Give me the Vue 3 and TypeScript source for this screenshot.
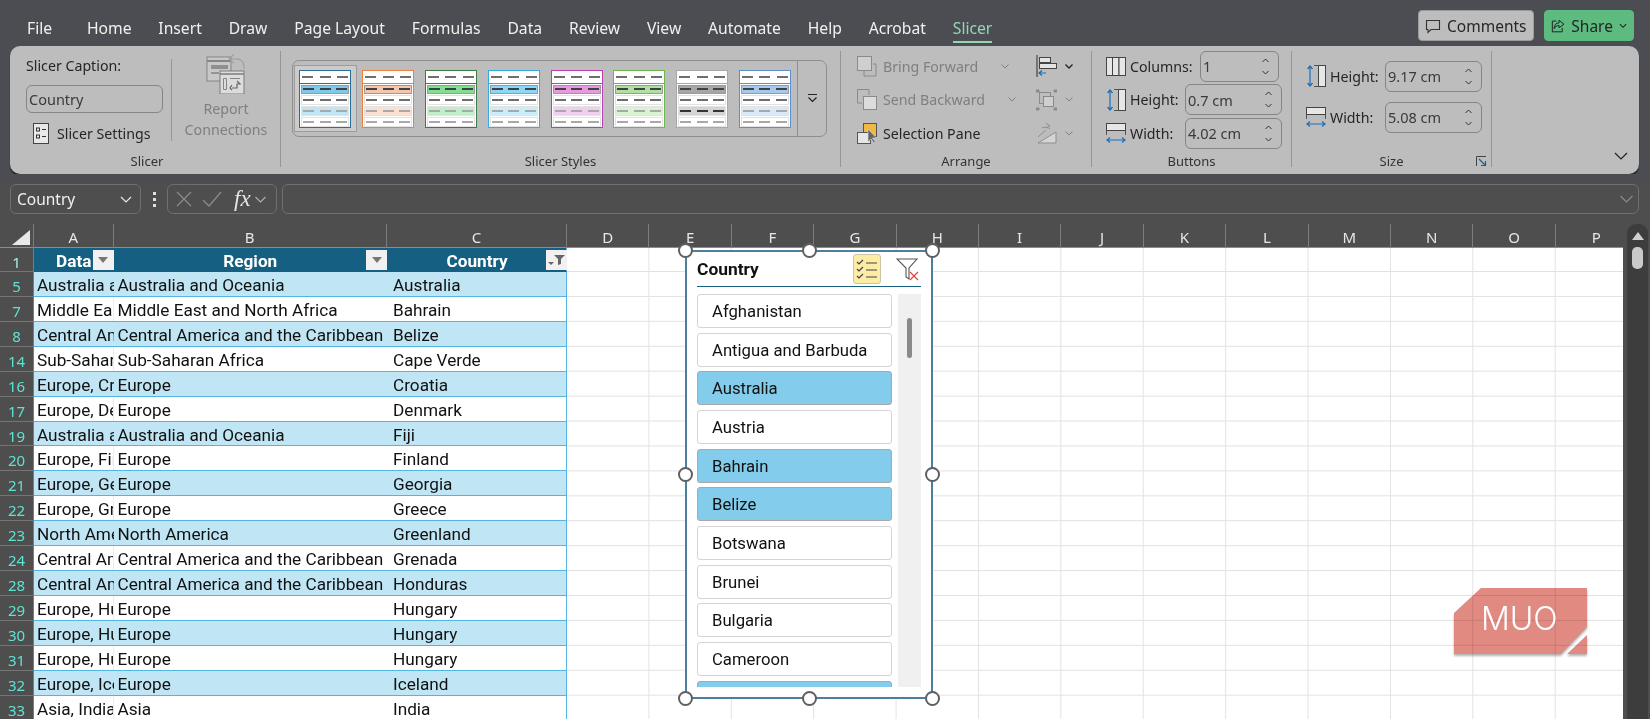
<script setup lang="ts">
const tabs = ['File', 'Home', 'Insert', 'Draw', 'Page Layout', 'Formulas', 'Data', 'Review', 'View', 'Automate', 'Help', 'Acrobat']

const swatches = [
  { line: '#2a6f97', band: '#7fcaec', light: '#c0e6f5', selected: true },
  { line: '#f08040', band: '#f6c5ab', light: '#fbe0d2' },
  { line: '#3a7d44', band: '#80e090', light: '#c0eec8' },
  { line: '#35ace0', band: '#8ad7f7', light: '#caedfb' },
  { line: '#b840b0', band: '#e89ae0', light: '#f2ceee' },
  { line: '#6cb84c', band: '#b2e0a0', light: '#d9f2d0' },
  { line: '#a8a8a8', band: '#a6a6a6', light: '#d4d4d4', dark: true },
  { line: '#5b8fd0', band: '#a6c9ec', light: '#dae9f8' },
]

const columns = ['D', 'E', 'F', 'G', 'H', 'I', 'J', 'K', 'L', 'M', 'N', 'O', 'P']

const rows = [
  { n: 5, a: 'Australia and Oceania', b: 'Australia and Oceania', c: 'Australia' },
  { n: 7, a: 'Middle East', b: 'Middle East and North Africa', c: 'Bahrain' },
  { n: 8, a: 'Central America', b: 'Central America and the Caribbean', c: 'Belize' },
  { n: 14, a: 'Sub-Saharan', b: 'Sub-Saharan Africa', c: 'Cape Verde' },
  { n: 16, a: 'Europe, Croatia', b: 'Europe', c: 'Croatia' },
  { n: 17, a: 'Europe, Denmark', b: 'Europe', c: 'Denmark' },
  { n: 19, a: 'Australia and Oceania', b: 'Australia and Oceania', c: 'Fiji' },
  { n: 20, a: 'Europe, Finland', b: 'Europe', c: 'Finland' },
  { n: 21, a: 'Europe, Georgia', b: 'Europe', c: 'Georgia' },
  { n: 22, a: 'Europe, Greece', b: 'Europe', c: 'Greece' },
  { n: 23, a: 'North America', b: 'North America', c: 'Greenland' },
  { n: 24, a: 'Central America', b: 'Central America and the Caribbean', c: 'Grenada' },
  { n: 28, a: 'Central America', b: 'Central America and the Caribbean', c: 'Honduras' },
  { n: 29, a: 'Europe, Hungary', b: 'Europe', c: 'Hungary' },
  { n: 30, a: 'Europe, Hungary', b: 'Europe', c: 'Hungary' },
  { n: 31, a: 'Europe, Hungary', b: 'Europe', c: 'Hungary' },
  { n: 32, a: 'Europe, Iceland', b: 'Europe', c: 'Iceland' },
  { n: 33, a: 'Asia, India', b: 'Asia', c: 'India' },
]

const slicerItems = [
  { name: 'Afghanistan', on: false },
  { name: 'Antigua and Barbuda', on: false },
  { name: 'Australia', on: true },
  { name: 'Austria', on: false },
  { name: 'Bahrain', on: true },
  { name: 'Belize', on: true },
  { name: 'Botswana', on: false },
  { name: 'Brunei', on: false },
  { name: 'Bulgaria', on: false },
  { name: 'Cameroon', on: false },
  { name: '', on: true },
]
</script>

<template>
  <div class="app">
    <header class="tabbar">
      <nav class="tabs">
        <span v-for="t in tabs" :key="t" class="tab">{{ t }}</span>
        <span class="tab tab-active">Slicer</span>
      </nav>
      <div class="top-actions">
        <button class="btn-comments">
          <svg width="16" height="16" viewBox="0 0 16 16" fill="none" stroke="#333" stroke-width="1.1"><path d="M1.5 2.5h13v9H6l-3 3v-3H1.500z" /></svg>
          Comments
        </button>
        <button class="btn-share">
          <svg width="16" height="16" viewBox="0 0 16 16" fill="none" stroke="#222" stroke-width="1.1"><path d="M9 1.500l5.500 4.500L9 10V7.500C6 7.500 4.500 9 3.500 11 3.500 7 5.500 4.500 9 4.500zM6 2.500H1.500v12h11V10" /></svg>
          Share
          <svg width="9" height="6" viewBox="0 0 9 6" fill="none" stroke="#222" stroke-width="1.2"><path d="M1 1l3.500 3.500L8 1" /></svg>
        </button>
      </div>
    </header>

    <section class="ribbon">
      <div class="group group-slicer">
        <div class="group-body">
          <div class="caption-col">
            <div class="caption-label">Slicer Caption:</div>
            <div class="caption-input">Country</div>
            <div class="settings">
              <svg width="16" height="21" viewBox="0 0 16 21">
                <rect x="0.5" y="0.5" width="15" height="20" fill="#e8e8e8" stroke="#444" />
                <rect x="3.5" y="5" width="3" height="3" fill="none" stroke="#333" />
                <rect x="3.5" y="12" width="3" height="3" fill="none" stroke="#333" />
                <path d="M9 6.500h4M9 13.500h4" stroke="#333" />
              </svg>
              <span>Slicer Settings</span>
            </div>
          </div>
          <div class="inner-sep"></div>
          <div class="report">
            <svg width="40" height="40" viewBox="0 0 40 40" fill="none">
              <rect x="1" y="3" width="24" height="24" fill="#c8c8c8" stroke="#858585" />
              <path d="M1 7h24" stroke="#858585" stroke-width="2" />
              <path d="M5 11h17v4H5z" fill="#8f8f8f" />
              <path d="M5 19h8" stroke="#858585" stroke-width="1.500" />
              <rect x="14" y="17" width="24" height="23" fill="#dcdcdc" stroke="#7d7d7d" />
              <path d="M14 20h24" stroke="#7d7d7d" stroke-width="1.500" />
              <path d="M17.500 24.500h3v11h-3zM24 24.500h10" stroke="#858585" />
              <path d="M31 27l3 3h-3v4h-5M26 31l-2 3 2 2" stroke="#666" stroke-width="1.200" />
              <path d="M28 0l-5 5 5 4M24 5h6a7 7 0 0 1 8 7v3" stroke="#a0a0a0" stroke-width="1.200" />
            </svg>
            <span>Report</span>
            <span>Connections</span>
          </div>
        </div>
        <div class="group-label">Slicer</div>
      </div>

      <div class="group group-styles">
        <div class="group-body">
          <div class="gallery">
            <div class="gallery-cells">
              <div v-for="(s, i) in swatches" :key="i" class="cell" :class="{ selected: s.selected }">
                <div class="swatch" :style="{ borderColor: s.line }">
                  <div class="sw-head" :style="{ borderColor: s.line }"><i></i><i></i><i></i></div>
                  <div class="sw-row sw-strong" :style="{ background: s.band }"><i></i><i></i><i></i></div>
                  <div class="sw-row"><i></i><i></i><i></i></div>
                  <div class="sw-row" :class="s.dark ? 'sw-dark' : 'sw-soft'" :style="{ background: s.light }"><i></i><i></i><i></i></div>
                  <div class="sw-row sw-soft"><i></i><i></i><i></i></div>
                </div>
              </div>
            </div>
            <div class="gallery-more">
              <svg width="11" height="11" viewBox="0 0 11 11" fill="none" stroke="#222" stroke-width="1.2"><path d="M1 1.500h9M1.500 4.500l4 4 4-4" /></svg>
            </div>
          </div>
        </div>
        <div class="group-label">Slicer Styles</div>
      </div>

      <div class="group group-arrange">
        <div class="group-body">
          <div class="arrange-col">
            <div class="arr-row muted">
              <svg width="20" height="21" viewBox="0 0 20 21" fill="none" stroke="#8a8a8a"><path d="M7 8v12h12V8h-3" /><rect x="0.5" y="0.5" width="14" height="14" fill="#cfcfcf" /></svg>
              <span>Bring Forward</span>
              <svg class="chev" width="8" height="5" viewBox="0 0 8 5" fill="none" stroke="#808080"><path d="M.5.5L4 4 7.500.5" /></svg>
            </div>
            <div class="arr-row muted">
              <svg width="20" height="21" viewBox="0 0 20 21" fill="none" stroke="#8a8a8a"><path d="M12 6V.5H.5V14H5" /><rect x="6.5" y="7.5" width="13" height="13" fill="#dcdcdc" /></svg>
              <span>Send Backward</span>
              <svg class="chev" width="8" height="5" viewBox="0 0 8 5" fill="none" stroke="#808080"><path d="M.5.5L4 4 7.500.5" /></svg>
            </div>
            <div class="arr-row">
              <svg width="20" height="21" viewBox="0 0 20 21" fill="none">
                <rect x="6.5" y="0.5" width="13" height="13" fill="#efb847" stroke="#555" />
                <rect x="0.5" y="9.5" width="13" height="11" fill="#e6e6e6" stroke="#555" />
                <path d="M11 6v13l3-3 3 4 1.500-1-3-4h4z" fill="#666" stroke="#ddd" stroke-width="0.6" />
              </svg>
              <span>Selection Pane</span>
            </div>
          </div>
          <div class="arrange-col arrange-tools">
            <div class="tool-row">
              <svg width="21" height="22" viewBox="0 0 21 22" fill="none">
                <path d="M1 0v22" stroke="#444" stroke-width="1.2" />
                <rect x="3.5" y="2.5" width="11" height="5" fill="#e4e4e4" stroke="#444" />
                <rect x="3.5" y="8.5" width="17" height="5" fill="#e4e4e4" stroke="#444" />
                <path d="M10 18H3M6 15.500L3 18l3 2.500" stroke="#1a6fb8" stroke-width="1.2" />
              </svg>
              <svg width="8" height="5" viewBox="0 0 8 5" fill="none" stroke="#222" stroke-width="1.3"><path d="M.5.5L4 4 7.500.5" /></svg>
            </div>
            <div class="tool-row">
              <svg width="21" height="22" viewBox="0 0 21 22" fill="none" stroke="#8a8a8a">
                <rect x="3.5" y="3.5" width="11" height="11" />
                <rect x="7.5" y="7.5" width="10" height="10" fill="#cfcfcf" />
                <path d="M0 1h3v2H0zM18 1h3v2h-3zM0 19h3v2H0zM18 19h3v2h-3z" fill="#8a8a8a" />
              </svg>
              <svg width="8" height="5" viewBox="0 0 8 5" fill="none" stroke="#808080"><path d="M.5.5L4 4 7.500.5" /></svg>
            </div>
            <div class="tool-row">
              <svg width="21" height="22" viewBox="0 0 21 22" fill="none" stroke="#8f8f8f">
                <path d="M20 10v11H2z" fill="#d4d4d4" />
                <path d="M2 15l8-7M6 6c3-1.500 6-1 8 1M10 1l4 3-4 2" />
              </svg>
              <svg width="8" height="5" viewBox="0 0 8 5" fill="none" stroke="#808080"><path d="M.5.5L4 4 7.500.5" /></svg>
            </div>
          </div>
        </div>
        <div class="group-label">Arrange</div>
      </div>

      <div class="group group-buttons">
        <div class="group-body stack">
          <div class="field">
            <svg width="20" height="19" viewBox="0 0 20 19" fill="#e6e6e6" stroke="#444"><rect x="0.500" y="0.500" width="6" height="18" /><rect x="6.500" y="0.500" width="6.500" height="18" /><rect x="13" y="0.500" width="6.500" height="18" /></svg>
            <span class="field-label wide">Columns:</span>
            <div class="spin narrow">
              <span>1</span>
              <span class="arrows"><svg width="7" height="5" viewBox="0 0 7 5" fill="none" stroke="#333"><path d="M.5 4L3.500 1l3 3" /></svg><svg width="7" height="5" viewBox="0 0 7 5" fill="none" stroke="#333"><path d="M.5 1l3 3 3-3" /></svg></span>
            </div>
          </div>
          <div class="field">
            <svg width="20" height="22" viewBox="0 0 20 22" fill="none"><path d="M4 1v20M1.500 4L4 1l2.500 3M1.500 18L4 21l2.500-3" stroke="#1a6fb8" stroke-width="1.200" /><path d="M8 .5h4M8 21.500h4" stroke="#555" /><rect x="12.500" y="0.500" width="7" height="21" fill="#e6e6e6" stroke="#444" /></svg>
            <span class="field-label">Height:</span>
            <div class="spin">
              <span>0.7 cm</span>
              <span class="arrows"><svg width="7" height="5" viewBox="0 0 7 5" fill="none" stroke="#333"><path d="M.5 4L3.500 1l3 3" /></svg><svg width="7" height="5" viewBox="0 0 7 5" fill="none" stroke="#333"><path d="M.5 1l3 3 3-3" /></svg></span>
            </div>
          </div>
          <div class="field">
            <svg width="20" height="21" viewBox="0 0 20 21" fill="none"><rect x="0.500" y="0.500" width="19" height="7" fill="#e6e6e6" stroke="#444" /><path d="M.5 8v4M19.500 8v4" stroke="#555" /><path d="M1 17h18M4 14.500L1 17l3 2.500M16 14.500l3 2.500-3 2.500" stroke="#1a6fb8" stroke-width="1.200" /></svg>
            <span class="field-label">Width:</span>
            <div class="spin">
              <span>4.02 cm</span>
              <span class="arrows"><svg width="7" height="5" viewBox="0 0 7 5" fill="none" stroke="#333"><path d="M.5 4L3.500 1l3 3" /></svg><svg width="7" height="5" viewBox="0 0 7 5" fill="none" stroke="#333"><path d="M.5 1l3 3 3-3" /></svg></span>
            </div>
          </div>
        </div>
        <div class="group-label">Buttons</div>
      </div>

      <div class="group group-size">
        <div class="group-body stack size-stack">
          <div class="field">
            <svg width="20" height="22" viewBox="0 0 20 22" fill="none"><path d="M4 1v20M1.500 4L4 1l2.500 3M1.500 18L4 21l2.500-3" stroke="#1a6fb8" stroke-width="1.200" /><path d="M8 .5h4M8 21.500h4" stroke="#555" /><rect x="12.500" y="0.500" width="7" height="21" fill="#e6e6e6" stroke="#444" /></svg>
            <span class="field-label">Height:</span>
            <div class="spin">
              <span>9.17 cm</span>
              <span class="arrows"><svg width="7" height="5" viewBox="0 0 7 5" fill="none" stroke="#333"><path d="M.5 4L3.500 1l3 3" /></svg><svg width="7" height="5" viewBox="0 0 7 5" fill="none" stroke="#333"><path d="M.5 1l3 3 3-3" /></svg></span>
            </div>
          </div>
          <div class="field">
            <svg width="20" height="21" viewBox="0 0 20 21" fill="none"><rect x="0.500" y="0.500" width="19" height="7" fill="#e6e6e6" stroke="#444" /><path d="M.5 8v4M19.500 8v4" stroke="#555" /><path d="M1 17h18M4 14.500L1 17l3 2.500M16 14.500l3 2.500-3 2.500" stroke="#1a6fb8" stroke-width="1.200" /></svg>
            <span class="field-label">Width:</span>
            <div class="spin">
              <span>5.08 cm</span>
              <span class="arrows"><svg width="7" height="5" viewBox="0 0 7 5" fill="none" stroke="#333"><path d="M.5 4L3.500 1l3 3" /></svg><svg width="7" height="5" viewBox="0 0 7 5" fill="none" stroke="#333"><path d="M.5 1l3 3 3-3" /></svg></span>
            </div>
          </div>
        </div>
        <div class="group-label">Size</div>
        <svg class="launcher" width="11" height="11" viewBox="0 0 11 11" fill="none"><path d="M.5 10V.5H10" stroke="#444" /><path d="M3 3l6.500 6.500M9.500 5v4.500H5" stroke="#1a5f90" stroke-width="1.200" /></svg>
      </div>

      <div class="ribbon-end">
        <svg width="14" height="8" viewBox="0 0 14 8" fill="none" stroke="#222" stroke-width="1.200"><path d="M1 1l6 6 6-6" /></svg>
      </div>
    </section>

    <section class="formula-bar">
      <div class="name-box">
        <span>Country</span>
        <svg width="12" height="7" viewBox="0 0 12 7" fill="none" stroke="#e8e8e8" stroke-width="1.200"><path d="M1 1l5 5 5-5" /></svg>
      </div>
      <div class="dots"><i></i><i></i><i></i></div>
      <div class="fx-box">
        <svg width="16" height="16" viewBox="0 0 16 16" fill="none" stroke="#8c8c8c" stroke-width="1.200"><path d="M1 1l14 14M15 1L1 15" /></svg>
        <svg width="20" height="16" viewBox="0 0 20 16" fill="none" stroke="#8c8c8c" stroke-width="1.200"><path d="M1 9l6 6L19 1" /></svg>
        <span class="fx">fx</span>
        <svg width="11" height="7" viewBox="0 0 11 7" fill="none" stroke="#b0b0b0" stroke-width="1.100"><path d="M.5 1l5 5 5-5" /></svg>
      </div>
      <div class="formula-input">
        <svg width="13" height="8" viewBox="0 0 13 8" fill="none" stroke="#8c8c8c" stroke-width="1.100"><path d="M.5 1l6 6 6-6" /></svg>
      </div>
    </section>

    <section class="sheet">
      <div class="sheet-main">
        <div class="col-heads">
          <div class="corner"><span class="corner-tri"></span></div>
          <div class="col-head col-a">A</div>
          <div class="col-head col-b">B</div>
          <div class="col-head col-c">C</div>
          <div v-for="c in columns" :key="c" class="col-head col-n">{{ c }}</div>
        </div>

        <div class="grid">
          <div class="row-heads">
            <div class="row-head row-head-first">1</div>
            <div v-for="r in rows" :key="r.n" class="row-head">{{ r.n }}</div>
          </div>
          <div class="table">
            <div class="tr thead">
              <div class="td col-a">Data<span class="filter-btn"><i class="tri"></i></span></div>
              <div class="td col-b">Region<span class="filter-btn"><i class="tri"></i></span></div>
              <div class="td col-c">Country
                <span class="filter-btn">
                  <svg width="17" height="12" viewBox="0 0 17 12"><path d="M0 8h6L3 11z" fill="#666" /><path d="M6 1h11l-4 4v5l-3 1V5z" fill="#666" /></svg>
                </span>
              </div>
            </div>
            <div v-for="(r, i) in rows" :key="r.n" class="tr" :class="{ band: i % 2 === 0 }">
              <div class="td col-a">{{ r.a }}</div>
              <div class="td col-b">{{ r.b }}</div>
              <div class="td col-c">{{ r.c }}</div>
            </div>
          </div>
        </div>
      </div>

      <aside class="vscroll">
        <div class="vscroll-inner">
          <span class="up-arrow"></span>
          <span class="vthumb"></span>
        </div>
      </aside>

      <div class="slicer">
        <div class="slicer-head">
          <span class="slicer-title">Country</span>
          <span class="multi-btn">
            <svg width="22" height="20" viewBox="0 0 22 20" fill="none" stroke="#444" stroke-width="1.200">
              <path d="M1 3l2 2 4-4M1 10l2 2 4-4M1 17l2 2 4-4" />
              <path d="M10 4h11M10 11h11M10 18h11" />
            </svg>
          </span>
          <svg class="clear-btn" width="23" height="23" viewBox="0 0 23 23" fill="none">
            <path d="M1 1h20l-8 9v11l-3-2v-9z" stroke="#555" stroke-width="1.100" />
            <path d="M14 14l8 8M22 14l-8 8" stroke="#e2483f" stroke-width="1.300" />
          </svg>
        </div>
        <div class="slicer-body">
          <div class="slicer-list">
            <div v-for="(it, i) in slicerItems" :key="i" class="slicer-item" :class="{ on: it.on }">{{ it.name }}</div>
          </div>
          <div class="slicer-scroll"><span class="slicer-thumb"></span></div>
        </div>
        <span class="handle h-tl"></span>
        <span class="handle h-tm"></span>
        <span class="handle h-tr"></span>
        <span class="handle h-ml"></span>
        <span class="handle h-mr"></span>
        <span class="handle h-bl"></span>
        <span class="handle h-bm"></span>
        <span class="handle h-br"></span>
      </div>

      <div class="muo">
        <svg width="134" height="67" viewBox="0 0 134 67">
          <path d="M0 25L27 0h106v39l-26 27H0zM113 66l20-19v19z" fill="#e18a82" />
        </svg>
        <span class="muo-text">MUO</span>
      </div>
    </section>
  </div>
</template>

<style scoped>
.app {
  width: 1650px;
  height: 719px;
  overflow: hidden;
  background: #4b4d52;
  font-family: "Noto Sans", "Open Sans", sans-serif;
  color: #262626;
  display: flex;
  flex-direction: column;
}

/* top tabs */
.tabbar {
  height: 46px;
  flex: none;
  display: flex;
  justify-content: space-between;
}
.tabs {
  display: flex;
  gap: 26.8px;
  padding-left: 27px;
}
.tab {
  font-size: 15.7px;
  line-height: 20px;
  margin-top: 18px;
  height: 23px;
  color: #f0f0f0;
}
.tab:first-child {
  margin-right: 8px;
}
.tab-active {
  color: #93d7b1;
  border-bottom: 2px solid #93d7b1;
}
.top-actions {
  display: flex;
  gap: 10px;
  padding: 10px 16px 0 0;
}
.top-actions button {
  height: 31px;
  border: 1px solid #9a9a9a;
  border-radius: 4px;
  font: inherit;
  font-size: 15.5px;
  color: #262626;
  display: flex;
  align-items: center;
  gap: 6px;
  padding: 0 6px;
}
.btn-comments {
  width: 116px;
  background: #bdbdbd;
}
.btn-share {
  width: 90px;
  background: #5dbb80;
  border-color: #5dbb80 !important;
}

/* ribbon */
.ribbon {
  margin-left: 10px;
  width: 1629px;
  height: 128px;
  flex: none;
  box-sizing: border-box;
  padding: 5px 0 7px;
  background: #bdbdbd;
  border-radius: 10px;
  box-shadow: 0 2px 1px rgba(0, 0, 0, 0.55);
  display: flex;
  font-size: 14.2px;
}
.group {
  position: relative;
  flex: none;
  box-sizing: border-box;
  border-right: 1px solid #969696;
  display: flex;
  flex-direction: column;
}
.group-body {
  flex: 1;
  display: flex;
  min-height: 0;
}
.group-label {
  height: 18px;
  line-height: 18px;
  font-size: 13px;
  text-align: center;
  color: #333;
  margin: 3px 0 -3px;
}
.group-slicer { width: 271px; }
.group-styles { width: 560px; }
.group-arrange { width: 251px; }
.group-buttons { width: 200px; }
.group-size { width: 200px; }
.group-slicer .group-label { padding-left: 4px; }

.caption-col {
  width: 161px;
  box-sizing: border-box;
  padding: 5px 0 0 16px;
  flex: none;
}
.caption-label {
  line-height: 20px;
}
.caption-input {
  width: 137px;
  height: 28px;
  box-sizing: border-box;
  margin-top: 9px;
  padding-left: 2px;
  line-height: 26px;
  border: 1px solid #858585;
  border-radius: 6px;
  font-size: 14.5px;
  color: #3a3a3a;
}
.settings {
  display: flex;
  align-items: center;
  gap: 8px;
  margin: 10px 0 0 7px;
  height: 21px;
}
.inner-sep {
  width: 1px;
  height: 82px;
  margin-top: 8px;
  background: #969696;
}
.report {
  flex: 1;
  display: flex;
  flex-direction: column;
  align-items: center;
  color: #7f7f7f;
  line-height: 20.5px;
  padding-top: 3px;
}
.report svg {
  margin-bottom: 5px;
}

.gallery {
  margin: 9px 0 0 11px;
  width: 535px;
  height: 77px;
  box-sizing: border-box;
  border: 1px solid #8f8f8f;
  border-radius: 7px;
  display: flex;
}
.gallery-cells {
  display: flex;
  padding: 4px 0 0 1px;
  width: 504px;
  box-sizing: border-box;
}
.cell {
  width: 62.8px;
  height: 67px;
  flex: none;
  box-sizing: border-box;
  display: flex;
  align-items: center;
  justify-content: center;
  border: 1px solid transparent;
}
.cell.selected {
  background: #cbcbcb;
  border-color: #9c9c9c;
}
.swatch {
  width: 52px;
  height: 58px;
  box-sizing: border-box;
  border: 1px solid;
  background: #fff;
  display: flex;
  flex-direction: column;
}
.sw-head {
  height: 12px;
  flex: none;
  border-bottom: 1px solid;
  display: flex;
  align-items: center;
  justify-content: space-between;
  padding: 0 2px;
}
.sw-row {
  flex: 1;
  margin: 1px 1px 0;
  border: 1px solid #e2e2e2;
  display: flex;
  align-items: center;
  justify-content: space-between;
  padding: 0 1px;
}
.sw-head i,
.sw-row i {
  width: 11px;
  height: 2px;
  background: #6e6e6e;
}
.sw-strong {
  border-color: #9a9a9a;
}
.sw-strong i {
  background: #3c4246;
}
.sw-soft i {
  background: #a8a8a8;
}
.sw-dark i {
  background: #333;
}
.gallery-more {
  flex: 1;
  border-left: 1px solid #8f8f8f;
  display: flex;
  align-items: center;
  justify-content: center;
}

.arrange-col {
  display: flex;
  flex-direction: column;
  gap: 3.5px;
  padding-left: 16px;
  width: 195px;
  box-sizing: border-box;
}
.arr-row {
  height: 30px;
  display: flex;
  align-items: center;
  gap: 6px;
}
.arr-row.muted {
  color: #7f7f7f;
}
.chev {
  margin-left: 17px;
}
.arrange-tools {
  padding-left: 0;
  width: 50px;
}
.tool-row {
  height: 30px;
  display: flex;
  align-items: center;
  gap: 8px;
}

.stack {
  flex-direction: column;
  gap: 3.5px;
  padding-left: 14px;
}
.size-stack {
  padding-top: 10px;
  gap: 11px;
}
.field {
  height: 30px;
  display: flex;
  align-items: center;
  gap: 4px;
}
.field-label {
  width: 51px;
  flex: none;
}
.field-label.wide {
  width: 66px;
}
.spin {
  width: 97px;
  height: 31px;
  box-sizing: border-box;
  border: 1px solid #858585;
  border-radius: 6px;
  display: flex;
  align-items: center;
  justify-content: space-between;
  padding: 0 9px 0 2px;
  font-size: 14.5px;
  color: #3a3a3a;
}
.spin.narrow {
  width: 79px;
  padding-right: 9px;
}
.arrows {
  display: flex;
  flex-direction: column;
  gap: 7px;
}
.arrows svg {
  display: block;
}
.launcher {
  position: absolute;
  right: 4px;
  bottom: 0;
}
.ribbon-end {
  flex: 1;
  display: flex;
  align-items: flex-end;
  justify-content: flex-end;
  padding: 0 11px 7px 0;
}

/* formula bar */
.formula-bar {
  height: 30px;
  flex: none;
  margin-top: 10px;
  padding-left: 10px;
  display: flex;
  align-items: stretch;
  background: #4e4e4e;
  box-shadow: 0 -10px 0 #4b4d52, 0 10px 0 #4e4e4e;
}
.name-box,
.fx-box,
.formula-input {
  box-sizing: border-box;
  border: 1px solid #6f6f6f;
  border-radius: 6px;
  display: flex;
  align-items: center;
}
.name-box {
  width: 131px;
  justify-content: space-between;
  padding: 0 8px 0 6px;
  font-size: 15.5px;
  color: #f0f0f0;
}
.dots {
  width: 26px;
  display: flex;
  flex-direction: column;
  align-items: center;
  justify-content: center;
  gap: 3px;
}
.dots i {
  width: 3px;
  height: 3px;
  background: #e0e0e0;
}
.fx-box {
  width: 110px;
  padding-left: 8px;
  gap: 10px;
}
.fx {
  font-family: "Liberation Serif", serif;
  font-style: italic;
  font-size: 23px;
  color: #e4e4e4;
  margin: 0 -6px 0 2px;
}
.formula-input {
  margin-left: 5px;
  width: 1357px;
  justify-content: flex-end;
  padding-right: 5px;
}

/* sheet */
.sheet {
  position: relative;
  flex: 1;
  margin-top: 10px;
  display: flex;
  min-height: 0;
}
.sheet-main {
  width: 1623px;
  flex: none;
  overflow: hidden;
  background: #4e4e4e;
}
.col-heads {
  height: 24px;
  display: flex;
  background: #4e4e4e;
  box-shadow: inset 0 -1px 0 #8c8c8c;
}
.corner {
  width: 34px;
  flex: none;
  box-sizing: border-box;
  border-right: 1px solid #7c7c7c;
  position: relative;
}
.corner-tri {
  position: absolute;
  right: 3px;
  bottom: 3px;
  border-left: 18px solid transparent;
  border-bottom: 15px solid #e8e8e8;
}
.col-head {
  flex: none;
  box-sizing: border-box;
  border-right: 1px solid #7c7c7c;
  text-align: center;
  line-height: 26px;
  font-size: 15px;
  color: #e6e6e6;
}
.col-a { width: 79.5px; }
.col-b { width: 273.5px; }
.col-c { width: 180px; }
.col-n { width: 82.4px; }

.grid {
  display: flex;
  height: 471px;
}
.row-heads {
  width: 34px;
  flex: none;
  background: #4e4e4e;
}
.row-head {
  height: 24.93px;
  box-sizing: border-box;
  border-bottom: 1px solid #757575;
  border-right: 1px solid #7c7c7c;
  text-align: center;
  line-height: 28px;
  font-size: 15px;
  color: #5fe3d1;
}
.row-head-first {
  height: 24px;
  color: #a8efe4;
}

.table {
  flex: 1;
  background-color: #fff;
  background-image:
    linear-gradient(to bottom, transparent 23.93px, #e2e2e2 23.93px),
    linear-gradient(to right, transparent 81.4px, #e2e2e2 81.4px);
  background-size: 100% 24.93px, 82.4px 100%;
  background-position: 0 -0.93px, 533px 0;
  font-family: "Roboto", "Noto Sans", sans-serif;
  font-size: 17.2px;
  color: #111;
}
.tr {
  display: flex;
  width: 533px;
  height: 24.93px;
  box-sizing: border-box;
  border-bottom: 1px solid #55b5e2;
  border-right: 1px solid #55b5e2;
  background: #fff;
}
.tr.band {
  background: #c0e6f5;
}
.td {
  box-sizing: border-box;
  overflow: hidden;
  white-space: nowrap;
  line-height: 27px;
  position: relative;
  flex: none;
}
.td.col-a { padding-left: 3px; }
.td.col-b { padding-left: 4px; }
.td.col-c { padding-left: 6px; }
.tr:not(.band):not(.thead) .td.col-a { border-right: 1px solid #ececec; }
.thead {
  height: 24px;
  background: #156082;
  color: #fff;
  font-weight: 700;
  border-color: #156082 #55b5e2 #156082 #156082;
}
.thead .td {
  text-align: center;
  padding: 0 !important;
}
.filter-btn {
  position: absolute;
  right: 0;
  top: 2px;
  width: 21px;
  height: 20px;
  background: #f1f1f1;
  display: flex;
  align-items: center;
  justify-content: center;
}
.tri {
  border-left: 5px solid transparent;
  border-right: 5px solid transparent;
  border-top: 6px solid #777;
}

.vscroll {
  flex: 1;
  background: #4e4e4e;
  padding-left: 4px;
  box-sizing: border-box;
}
.vscroll-inner {
  width: 21px;
  height: 100%;
  border-radius: 9px 9px 0 0;
  background: #3d3d3d;
  display: flex;
  flex-direction: column;
  align-items: center;
  padding-top: 8px;
  box-sizing: border-box;
}
.up-arrow {
  border-left: 6px solid transparent;
  border-right: 6px solid transparent;
  border-bottom: 8px solid #d0d0d0;
}
.vthumb {
  width: 11px;
  height: 22px;
  margin-top: 7px;
  border-radius: 5px;
  background: #cacaca;
}

/* floating slicer */
.slicer {
  position: absolute;
  left: 685px;
  top: 26px;
  width: 248px;
  height: 449px;
  box-sizing: border-box;
  border: 2px solid #4d7f9d;
  background: #fff;
  padding: 0 10px;
  font-family: "Roboto", "Noto Sans", sans-serif;
}
.slicer-head {
  height: 34px;
  display: flex;
  align-items: center;
  border-bottom: 1.5px solid #156082;
}
.slicer-title {
  flex: 1;
  font-weight: 700;
  font-size: 17.4px;
  color: #111;
}
.multi-btn {
  width: 28px;
  height: 30px;
  box-sizing: border-box;
  background: #fdeca6;
  border: 1px solid #c9c4a6;
  border-radius: 3px;
  display: flex;
  align-items: center;
  justify-content: center;
  margin-right: 15px;
}
.clear-btn {
  margin-right: 2px;
}
.slicer-body {
  display: flex;
  margin-top: 7px;
  height: 393px;
  overflow: hidden;
}
.slicer-list {
  width: 195px;
  flex: none;
}
.slicer-item {
  height: 34px;
  margin-bottom: 4.67px;
  box-sizing: border-box;
  border: 1px solid #d4d4d4;
  border-radius: 3px;
  background: #fff;
  padding-left: 14px;
  line-height: 33px;
  font-size: 16.7px;
  color: #111;
}
.slicer-item.on {
  background: #83ccec;
  border-color: #a9a9a9;
}
.slicer-scroll {
  margin-left: 6px;
  width: 23px;
  background: #f0f0f0;
  position: relative;
}
.slicer-thumb {
  position: absolute;
  left: 9px;
  top: 24px;
  width: 5px;
  height: 40px;
  border-radius: 3px;
  background: #8a8a8a;
}
.handle {
  position: absolute;
  width: 15px;
  height: 15px;
  box-sizing: border-box;
  border: 2.5px solid #5f5f5f;
  border-radius: 50%;
  background: #fff;
}
.h-tl { left: -9px; top: -9px; }
.h-tm { left: 115px; top: -9px; }
.h-tr { right: -9px; top: -9px; }
.h-ml { left: -9px; top: 215px; }
.h-mr { right: -9px; top: 215px; }
.h-bl { left: -9px; bottom: -9px; }
.h-bm { left: 115px; bottom: -9px; }
.h-br { right: -9px; bottom: -9px; }

/* watermark */
.muo {
  position: absolute;
  left: 1454px;
  top: 364px;
  width: 134px;
  height: 67px;
}
.muo svg {
  display: block;
  mix-blend-mode: multiply;
  filter: drop-shadow(0 2px 1px rgba(0, 0, 0, 0.3));
}
.muo-text {
  position: absolute;
  left: 27px;
  top: 13px;
  font-family: "Inter", "Liberation Sans", sans-serif;
  font-weight: 300;
  font-size: 32px;
  line-height: 36px;
  color: #fff;
}
</style>

<style>
html,
body {
  margin: 0;
  background: #4b4d52;
}
</style>
